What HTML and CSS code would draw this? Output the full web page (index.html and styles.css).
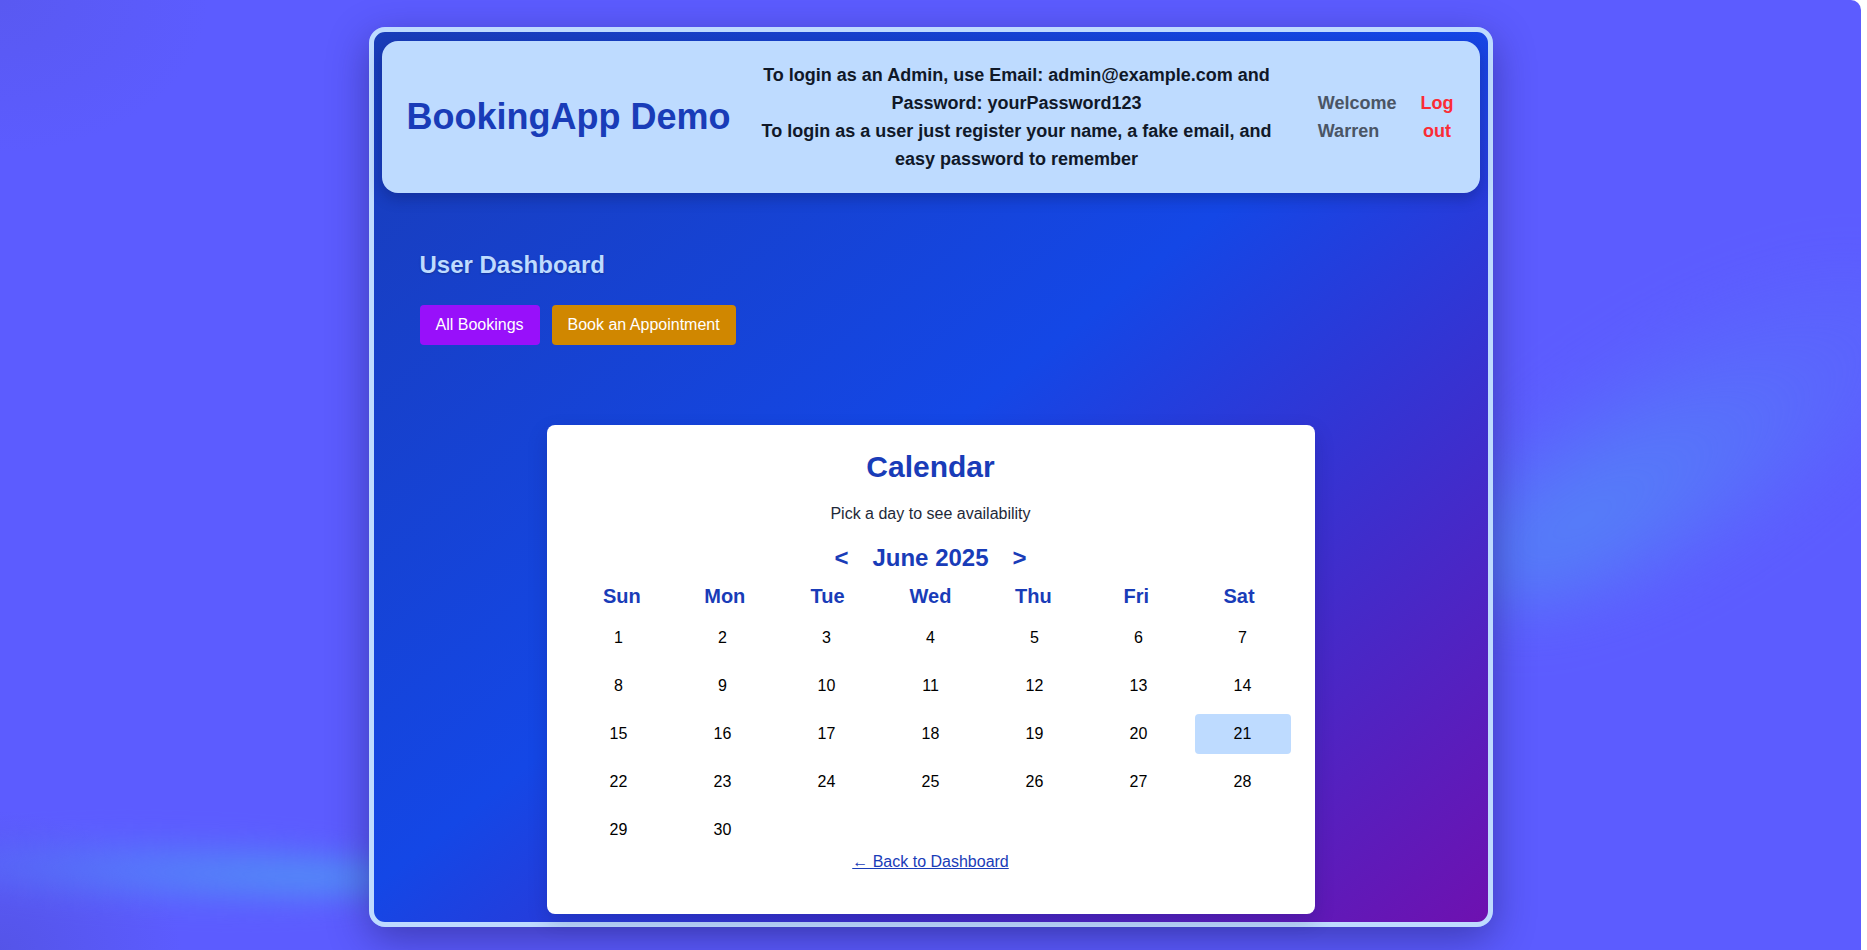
FILE: index.html
```html
<!DOCTYPE html>
<html lang="en">
<head>
<meta charset="utf-8">
<title>BookingApp Demo</title>
<link rel="stylesheet" href="styles.css">
</head>
<body>
<div class="page">
  <div class="app">
    <header class="topbar">
      <h1 class="brand">BookingApp Demo</h1>
      <div class="info">
        <p>To login as an Admin, use Email: admin@example.com and Password: yourPassword123</p>
        <p>To login as a user just register your name, a fake email, and easy password to remember</p>
      </div>
      <nav class="usernav">
        <span class="welcome">Welcome Warren</span>
        <button class="logout" type="button">Log out</button>
      </nav>
    </header>

    <main class="dash">
      <h2 class="dash-title">User Dashboard</h2>
      <div class="actions">
        <button class="btn btn-purple" type="button">All Bookings</button>
        <button class="btn btn-orange" type="button">Book an Appointment</button>
      </div>

      <section class="calendar">
        <h3 class="cal-title">Calendar</h3>
        <p class="cal-sub">Pick a day to see availability</p>
        <div class="month-nav">
          <button class="arrow" type="button">&lt;</button>
          <span class="month">June 2025</span>
          <button class="arrow" type="button">&gt;</button>
        </div>
        <div class="weekdays">
          <div class="wd">Sun</div><div class="wd">Mon</div><div class="wd">Tue</div><div class="wd">Wed</div><div class="wd">Thu</div><div class="wd">Fri</div><div class="wd">Sat</div>
        </div>
        <div class="days">
          <div class="day">1</div><div class="day">2</div><div class="day">3</div><div class="day">4</div><div class="day">5</div><div class="day">6</div><div class="day">7</div>
          <div class="day">8</div><div class="day">9</div><div class="day">10</div><div class="day">11</div><div class="day">12</div><div class="day">13</div><div class="day">14</div>
          <div class="day">15</div><div class="day">16</div><div class="day">17</div><div class="day">18</div><div class="day">19</div><div class="day">20</div><div class="day today">21</div>
          <div class="day">22</div><div class="day">23</div><div class="day">24</div><div class="day">25</div><div class="day">26</div><div class="day">27</div><div class="day">28</div>
          <div class="day">29</div><div class="day">30</div>
        </div>
        <div class="back"><a href="#" class="back-link">← Back to Dashboard</a></div>
      </section>
    </main>
  </div>
</div>
</body>
</html>
```

FILE: styles.css
```css
html {
  background: #ffffff;
}

body {
  margin: 0;
  font-family: "Liberation Sans", Arial, sans-serif;
}

.page {
  position: relative;
  overflow: hidden;
  box-sizing: border-box;
  width: calc(100% - 6px);
  min-height: 100vh;
  padding: 27px 0 23px;
  background:
    radial-gradient(ellipse 260px 200px at 0% 100%, rgba(70, 70, 190, 0.35), rgba(70, 70, 190, 0) 70%),
    radial-gradient(ellipse 300px 220px at 0% 0%, rgba(80, 80, 200, 0.25), rgba(80, 80, 200, 0) 70%),
    #5c5cff;
  border-top-right-radius: 10px;
}

.page::before {
  content: "";
  position: absolute;
  left: 1420px;
  top: 330px;
  width: 540px;
  height: 220px;
  border-radius: 50%;
  background: radial-gradient(ellipse at 25% 55%, rgba(82, 140, 245, 0.8), rgba(88, 115, 250, 0.35) 55%, rgba(92, 92, 255, 0) 100%);
  transform: rotate(-32deg);
  filter: blur(30px);
}

.page::after {
  content: "";
  position: absolute;
  left: -60px;
  top: 838px;
  width: 470px;
  height: 64px;
  border-radius: 50%;
  background: radial-gradient(ellipse at 80% 55%, rgba(80, 150, 245, 0.9), rgba(85, 120, 250, 0.4) 60%, rgba(92, 92, 255, 0) 100%);
  transform: rotate(2deg);
  filter: blur(14px);
}

.app {
  position: relative;
  z-index: 1;
  box-sizing: border-box;
  width: 1124px;
  margin: 0 auto;
  padding: 9px 8px 8px;
  border: 5px solid #bedbff;
  border-radius: 16px;
  background: linear-gradient(to bottom right, #193cb8 0%, #1447e6 48%, #6e11b0 100%);
  box-shadow: 0 12px 40px rgba(25, 20, 90, 0.45);
}

/* ---------- top bar ---------- */
.topbar {
  display: flex;
  align-items: center;
  padding: 20px 26px 20px 25px;
  background: #bedbff;
  border-radius: 16px;
  box-shadow: 0 6px 14px rgba(10, 20, 80, 0.3);
}

.brand {
  margin: 0;
  font-size: 36px;
  line-height: 40px;
  font-weight: 700;
  color: #193cb8;
  white-space: nowrap;
}

.info {
  width: 520px;
  margin-left: 26px;
  text-align: center;
  font-size: 18px;
  line-height: 28px;
  font-weight: 700;
  color: #101828;
}

.info p {
  margin: 0;
}

.usernav {
  display: flex;
  align-items: center;
  gap: 24px;
  margin-left: auto;
}

.welcome {
  width: min-content;
  font-size: 18px;
  line-height: 28px;
  font-weight: 700;
  color: #4a5565;
}

.logout {
  width: min-content;
  padding: 0;
  border: 0;
  background: none;
  font-family: inherit;
  font-size: 18px;
  line-height: 28px;
  font-weight: 700;
  color: #fb2c36;
  text-align: center;
  cursor: pointer;
}

/* ---------- dashboard ---------- */
.dash {
  padding: 56px 38px 0;
}

.dash-title {
  margin: 0 0 24px;
  font-size: 24px;
  line-height: 32px;
  font-weight: 700;
  color: #bedbff;
  text-shadow: 0 1px 2px rgba(0, 0, 0, 0.25);
}

.actions {
  display: flex;
  gap: 12px;
}

.btn {
  padding: 8px 16px;
  border: 0;
  border-radius: 4px;
  font-family: inherit;
  font-size: 16px;
  line-height: 24px;
  color: #ffffff;
  cursor: pointer;
}

.btn-purple {
  background: #9810fa;
}

.btn-orange {
  background: #d08700;
}

/* ---------- calendar ---------- */
.calendar {
  box-sizing: border-box;
  width: 768px;
  margin: 80px auto 0;
  padding: 24px 24px 40px;
  background: #ffffff;
  border-radius: 8px;
  box-shadow: 0 8px 20px rgba(10, 20, 80, 0.2);
  text-align: center;
}

.cal-title {
  margin: 0 0 17px;
  font-size: 30px;
  line-height: 36px;
  font-weight: 700;
  color: #193cb8;
}

.cal-sub {
  margin: 0 0 16px;
  font-size: 16px;
  line-height: 24px;
  color: #1e2939;
}

.month-nav {
  display: flex;
  justify-content: center;
  align-items: center;
  gap: 24px;
  margin-bottom: 8px;
}

.arrow {
  padding: 0;
  border: 0;
  background: none;
  font-family: inherit;
  font-size: 24px;
  line-height: 32px;
  font-weight: 700;
  color: #193cb8;
  cursor: pointer;
}

.month {
  font-size: 24px;
  line-height: 32px;
  font-weight: 700;
  color: #193cb8;
}

.weekdays {
  display: grid;
  grid-template-columns: repeat(7, 1fr);
  margin-bottom: 8px;
}

.days {
  display: grid;
  grid-template-columns: repeat(7, 1fr);
  gap: 8px;
}

.wd {
  font-size: 20px;
  line-height: 28px;
  font-weight: 700;
  color: #193cb8;
}

.day {
  padding: 8px;
  font-size: 16px;
  line-height: 24px;
  color: #000000;
  border-radius: 4px;
}

.today {
  background: #bedbff;
}

.back {
  font-size: 16px;
  line-height: 24px;
}

.back-link {
  color: #193cb8;
  text-decoration: underline;
}
```
